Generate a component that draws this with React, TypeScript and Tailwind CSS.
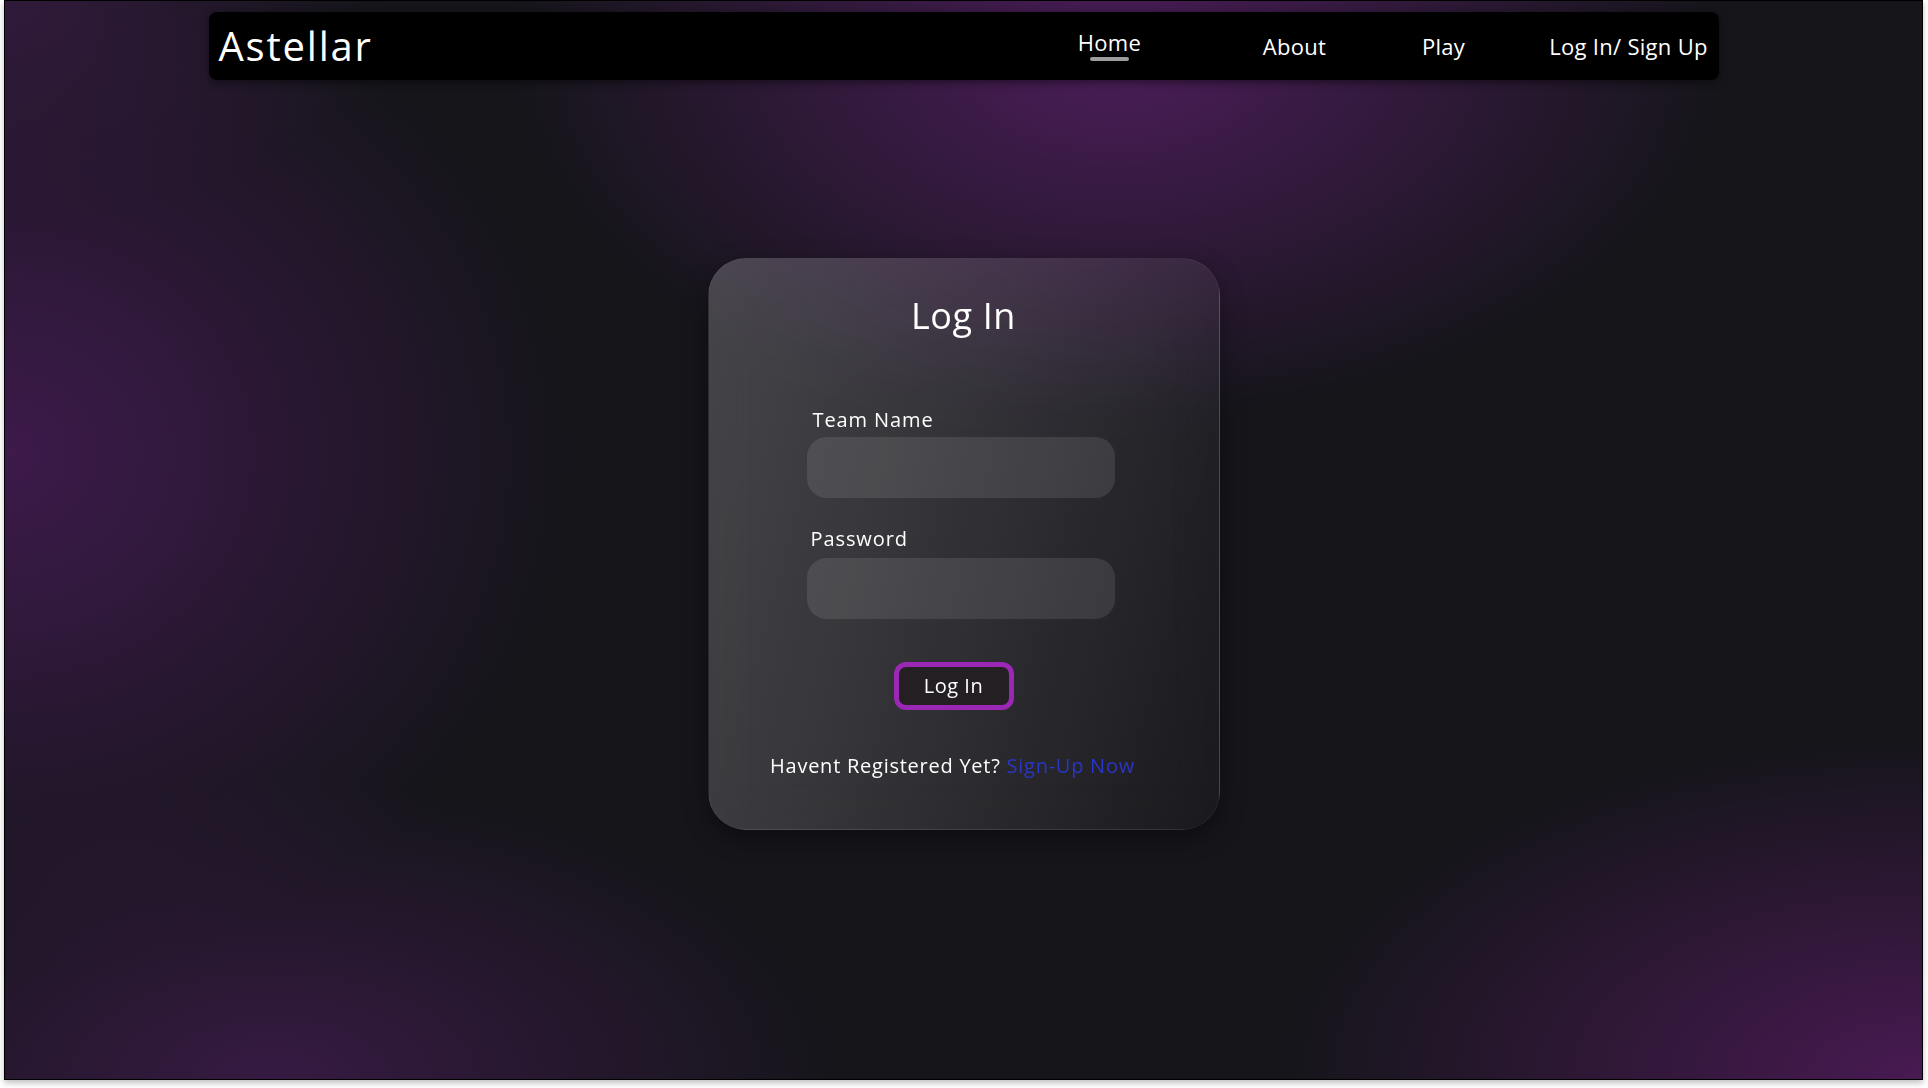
export default function App() {
  const font = "font-['Open_Sans',_'Liberation_Sans',_sans-serif]"
  return (
    <div className={`w-full h-[1088px] bg-white ${font}`}>
      <div className="ml-[4px] w-[1919px] h-[1080px] border border-black shadow-[0_3px_6px_rgba(0,0,0,0.25)] overflow-hidden bg-[radial-gradient(ellipse_32%_34%_at_58%_5%,#4b1d59_0%,transparent_100%),radial-gradient(ellipse_30%_48%_at_0%_42%,#3d1a4b_0%,transparent_100%),radial-gradient(ellipse_34%_32%_at_100%_100%,#481a52_0%,transparent_100%),radial-gradient(ellipse_30%_28%_at_14%_100%,#361a42_0%,transparent_100%),radial-gradient(ellipse_20%_20%_at_0%_0%,#2e1a38_0%,transparent_100%)] bg-[#15151a] flex flex-col items-center">
        <nav className="mt-[11px] w-[1510px] h-[68px] bg-black rounded-[8px] shadow-[0_2px_8px_rgba(0,0,0,0.5)] flex items-center pl-[10px] pr-[5px] text-white">
          <span className="text-[40px] leading-none tracking-[1.8px]">Astellar</span>
          <div className="ml-auto flex items-center text-[22px] tracking-[0.3px]">
            <a className="w-[110px] flex flex-col items-center -mt-[3px]">
              <span className="leading-[28px]">Home</span>
              <span className="mt-[1px] w-[39px] h-[4px] rounded-full bg-[#9d9d9d]" />
            </a>
            <a className="ml-[75px] w-[110px] text-center leading-[28px]">About</a>
            <a className="ml-[39px] w-[110px] text-center leading-[28px]">Play</a>
            <a className="ml-[45px] w-[170px] text-center leading-[28px]">Log In/ Sign Up</a>
          </div>
        </nav>

        <div className="mt-[178px] w-[512px] h-[572px] rounded-[38px] border border-white/[0.06] bg-[linear-gradient(105deg,rgba(255,255,255,0.21)_0%,rgba(255,255,255,0.13)_45%,rgba(255,255,255,0.02)_100%)] backdrop-blur-xl shadow-[0_8px_24px_rgba(0,0,0,0.35)] flex flex-col text-white">
          <h1 className="mt-[35px] text-center text-[36px] leading-[43px] tracking-[0.6px]">Log In</h1>

          <div className="mt-[69px] pl-[98px] flex flex-col">
            <label className="ml-[6px] text-[20px] leading-[28px] tracking-[0.9px]">Team Name</label>
            <input className="mt-[3px] w-[308px] h-[61px] rounded-[20px] bg-white/[0.1] outline-none px-4 text-white" />
            <label className="mt-[27px] ml-[4px] text-[20px] leading-[28px] tracking-[0.9px]">Password</label>
            <input type="password" className="mt-[5px] w-[308px] h-[61px] rounded-[20px] bg-white/[0.1] outline-none px-4 text-white" />
          </div>

          <button className="mt-[43px] ml-[185px] w-[120px] h-[48px] rounded-[12px] border-[5px] border-[#9a28b4] bg-[#231f23] text-[20px] tracking-[0.5px] text-white">
            Log In
          </button>

          <p className="mt-[42px] -ml-[22px] text-center text-[20px] leading-[28px] tracking-[0.75px]">
            Havent Registered Yet? <a className="text-[#2a35c9]">Sign-Up Now</a>
          </p>
        </div>
      </div>
    </div>
  )
}
